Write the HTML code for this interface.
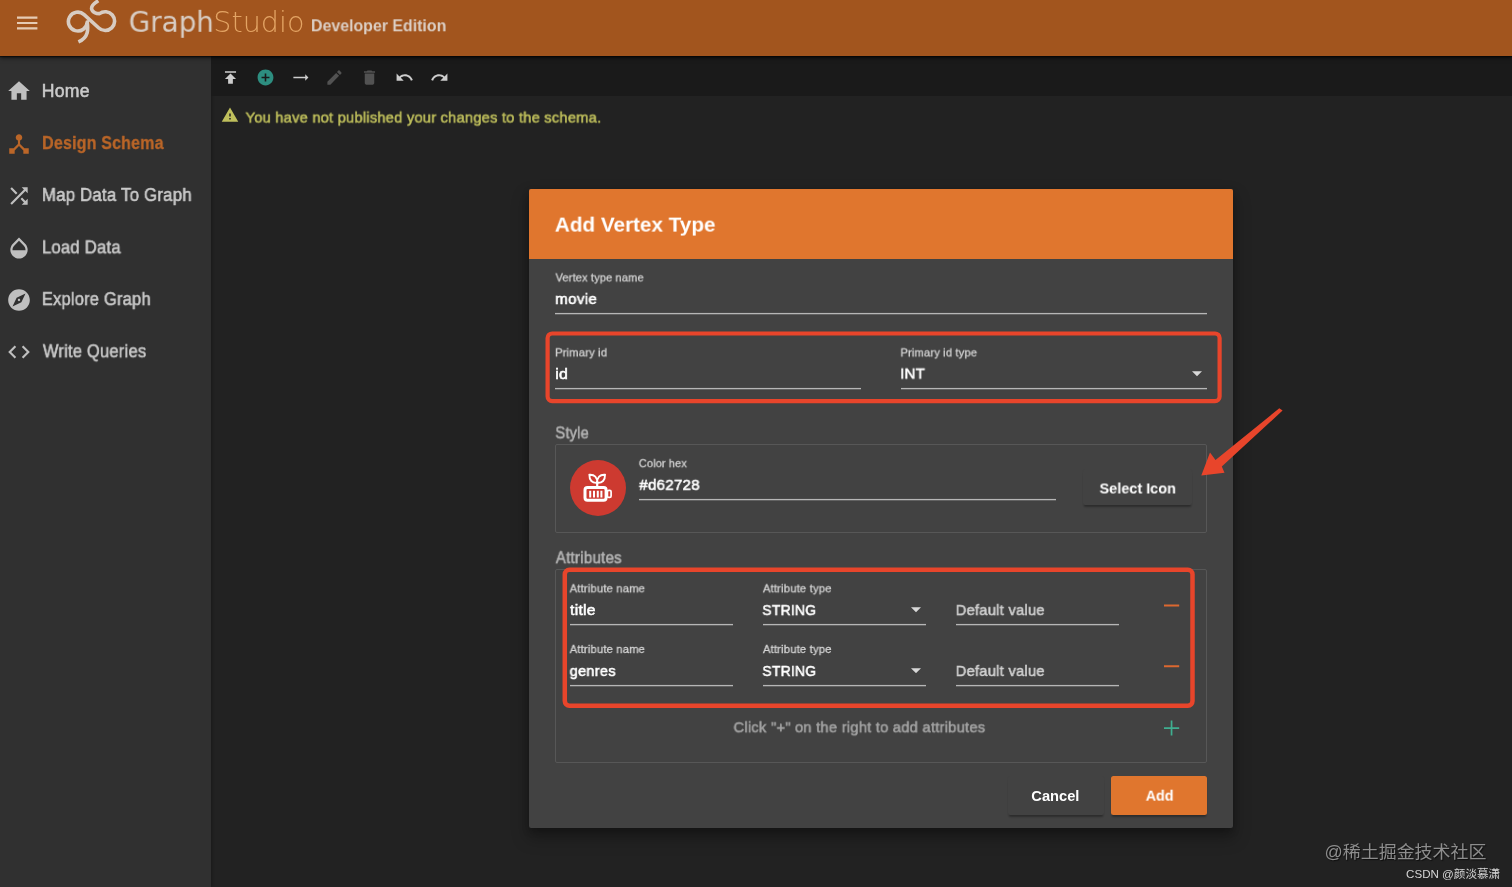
<!DOCTYPE html>
<html lang="en">
<head>
<meta charset="utf-8">
<title>GraphStudio - Add Vertex Type</title>
<style>
*{box-sizing:border-box;margin:0;padding:0}
html,body{width:1512px;height:887px;overflow:hidden;background:#222222;font-family:"Liberation Sans","Noto Sans CJK SC",sans-serif}
.abs,.t,svg.i{position:absolute}
.t{line-height:1;white-space:nowrap;display:inline-block;transform-origin:0 0;will-change:transform}
#header{left:0;top:0;width:1512px;height:56px;background:#a2551e;box-shadow:0 2px 4px rgba(0,0,0,.6),0 1px 1px rgba(0,0,0,.5)}
#side{left:0;top:56px;width:211px;height:831px;background:#303030;box-shadow:1px 0 3px rgba(0,0,0,.25)}
#tool{left:211px;top:56px;width:1301px;height:40px;background:#1a1a1a}
#dlg{left:529px;top:189px;width:704px;height:639px;background:#424242;border-radius:2px;box-shadow:0 9px 16px 2px rgba(0,0,0,.26),0 3px 7px rgba(0,0,0,.22)}
#dhead{left:529px;top:189px;width:704px;height:69.5px;background:#e0762e;border-radius:2px 2px 0 0}
.ul{height:1px;background:#b6b6b6;box-shadow:0 1px 0 rgba(182,182,182,.28),0 -1px 0 rgba(182,182,182,.08)}
.box{border:1px solid #575757;border-radius:2px}
.red{border:3.6px solid #e8452b;border-radius:7px}
.btn{background:#424242;border-radius:2.5px;box-shadow:0 3px 2px -1px rgba(0,0,0,.3),0 1px 2px rgba(0,0,0,.05)}
</style>
</head>
<body>
<nav aria-label="Main navigation">
<div class="abs" id="side"></div>
<!-- sidebar icons -->
<svg class="i" style="left:6px;top:78.4px" width="26" height="26" viewBox="0 0 24 24"><path fill="#bfbfbf" d="M10 20v-6h4v6h5v-8h3L12 3 2 12h3v8z"/></svg>
<svg class="i" style="left:6px;top:130.5px" width="26" height="26" viewBox="0 0 24 24"><path fill="#bb6628" d="M17 16l-4-4V8.82C14.16 8.4 15 7.3 15 6c0-1.66-1.34-3-3-3S9 4.34 9 6c0 1.300.84 2.400 2 2.820V12l-4 4H3v5h5v-3.050l4-4.200 4 4.200V21h5v-5h-4z"/></svg>
<svg class="i" style="left:6px;top:182.6px" width="26" height="26" viewBox="0 0 24 24"><path fill="#bfbfbf" d="M10.59 9.17L5.41 4 4 5.41l5.17 5.17 1.42-1.41zM14.5 4l2.04 2.04L4 18.59 5.410 20 17.960 7.460 20 9.500V4h-5.500zm.33 9.41l-1.41 1.41 3.13 3.13L14.5 20H20v-5.500l-2.040 2.040-3.130-3.130z"/></svg>
<svg class="i" style="left:6px;top:234.7px" width="26" height="26" viewBox="0 0 24 24"><path fill="#bfbfbf" d="M17.66 8L12 2.35 6.34 8C4.78 9.56 4 11.64 4 13.64s.78 4.11 2.34 5.67 3.61 2.35 5.66 2.35 4.1-.79 5.66-2.35S20 15.64 20 13.64 19.22 9.56 17.66 8zM6 14c.01-2 .62-3.27 1.76-4.4L12 5.27l4.24 4.38C17.38 10.77 17.99 12 18 14H6z"/></svg>
<svg class="i" style="left:6px;top:286.8px" width="26" height="26" viewBox="0 0 24 24"><path fill="#bfbfbf" d="M12 10.9c-.61 0-1.1.49-1.1 1.1s.49 1.1 1.1 1.1c.61 0 1.1-.49 1.1-1.1s-.49-1.1-1.1-1.1zM12 2C6.48 2 2 6.48 2 12s4.48 10 10 10 10-4.48 10-10S17.52 2 12 2zm2.19 12.19L6 18l3.81-8.19L18 6l-3.81 8.19z"/></svg>
<svg class="i" style="left:6px;top:338.9px" width="26" height="26" viewBox="0 0 24 24"><path fill="#bfbfbf" d="M9.4 16.6L4.8 12l4.6-4.6L8 6l-6 6 6 6 1.4-1.4zm5.2 0l4.6-4.6-4.6-4.6L16 6l6 6-6 6-1.4-1.4z"/></svg>
<span class="t" style="left:41px;top:82px;transform:translate(0.73px,0.97px) scaleX(1.0012);font-size:17.6px;font-weight:400;color:#cacaca;-webkit-text-stroke:0.55px #cacaca;letter-spacing:0.25px">Home</span>
<span class="t" style="left:42px;top:135px;transform:translate(0.09px,0.05px) scaleX(0.9100);font-size:17.6px;font-weight:700;color:#bb6628;-webkit-text-stroke:0.3px #bb6628;letter-spacing:0.2px">Design Schema</span>
<span class="t" style="left:41px;top:186px;transform:translate(0.97px,0.98px) scaleX(0.9515);font-size:17.6px;font-weight:400;color:#cacaca;-webkit-text-stroke:0.55px #cacaca;letter-spacing:0.25px">Map Data To Graph</span>
<span class="t" style="left:41px;top:239px;transform:translate(0.98px,0.37px) scaleX(0.9446);font-size:17.6px;font-weight:400;color:#cacaca;-webkit-text-stroke:0.55px #cacaca;letter-spacing:0.25px">Load Data</span>
<span class="t" style="left:41px;top:291px;transform:translate(0.88px,0.12px) scaleX(0.9336);font-size:17.6px;font-weight:400;color:#cacaca;-webkit-text-stroke:0.55px #cacaca;letter-spacing:0.25px">Explore Graph</span>
<span class="t" style="left:42px;top:343px;transform:translate(0.88px,0.27px) scaleX(0.9361);font-size:17.6px;font-weight:400;color:#cacaca;-webkit-text-stroke:0.55px #cacaca;letter-spacing:0.25px">Write Queries</span>
</nav>

<main>
<div class="abs" id="tool"></div>
<!-- toolbar icons -->
<svg class="i" style="left:220.85px;top:68.1px" width="19" height="19" viewBox="0 0 24 24"><path fill="#cdcdcd" d="M5 4v2h14V4H5zm0 10h4v6h6v-6h4l-7-7-7 7z"/></svg>
<svg class="i" style="left:255.65px;top:68.1px" width="19" height="19" viewBox="0 0 24 24"><path fill="#2d8e80" d="M12 2C6.48 2 2 6.48 2 12s4.48 10 10 10 10-4.48 10-10S17.52 2 12 2zm5 11h-4v4h-2v-4H7v-2h4V7h2v4h4v2z"/></svg>
<svg class="i" style="left:290.55px;top:68.1px" width="19" height="19" viewBox="0 0 24 24"><path fill="#cdcdcd" d="M22 12l-4-4v3H3v2h15v3z"/></svg>
<svg class="i" style="left:325.45px;top:68.1px" width="19" height="19" viewBox="0 0 24 24"><path fill="#525252" d="M3 17.25V21h3.75L17.81 9.94l-3.75-3.75L3 17.25zM20.71 7.04c.39-.39.39-1.02 0-1.41l-2.34-2.34c-.39-.39-1.02-.39-1.41 0l-1.83 1.83 3.75 3.75 1.83-1.83z"/></svg>
<svg class="i" style="left:360.35px;top:68.1px" width="19" height="19" viewBox="0 0 24 24"><path fill="#525252" d="M6 19c0 1.1.9 2 2 2h8c1.1 0 2-.9 2-2V7H6v12zM19 4h-3.500l-1-1h-5l-1 1H5v2h14V4z"/></svg>
<svg class="i" style="left:395.25px;top:68.1px" width="19" height="19" viewBox="0 0 24 24"><path fill="#cdcdcd" d="M12.5 8c-2.65 0-5.05.99-6.9 2.600L2 7v9h9l-3.620-3.620c1.390-1.160 3.160-1.880 5.120-1.880 3.540 0 6.550 2.310 7.600 5.500l2.370-.780C21.080 11.030 17.150 8 12.500 8z"/></svg>
<svg class="i" style="left:430.15px;top:68.1px" width="19" height="19" viewBox="0 0 24 24"><path fill="#cdcdcd" d="M18.400 10.600C16.550 8.990 14.150 8 11.500 8c-4.650 0-8.580 3.030-9.960 7.220L3.900 16c1.050-3.190 4.050-5.500 7.600-5.500 1.950 0 3.730.720 5.120 1.880L13 16h9V7l-3.600 3.600z"/></svg>
<!-- warning -->
<svg class="i" style="left:221.4px;top:106.2px" width="18" height="18" viewBox="0 0 24 24"><path fill="#bfbf5c" d="M1 21h22L12 2 1 21zm12-3h-2v-2h2v2zm0-4h-2v-4h2v4z"/></svg>
<span class="t" style="left:245px;top:109px;transform:translate(0.51px,0.55px) scaleX(0.9453);font-size:15.5px;font-weight:400;color:#bfbf5c;-webkit-text-stroke:0.55px #bfbf5c;letter-spacing:0.25px">You have not published your changes to the schema.</span>
</main>

<header>
<div class="abs" id="header"></div>
<!-- header icons -->
<svg class="i" style="left:15px;top:14px" width="24" height="18" viewBox="15 14 24 18"><path fill="#e6cbb4" d="M17 16.5h20.400v2.200H17zM17 21.900h20.400v2.200H17zM17 27.300h20.400v2.200H17z"/></svg>
<svg class="i" style="left:60px;top:0" width="64" height="50" viewBox="60 0 64 50" fill="none" stroke="#d8ccc2" stroke-width="3.600" stroke-linejoin="round">
<path d="M78.400 41.900 C88.800 37.500 88.200 29 87.200 22 A9.400 9.400 0 1 1 84.100 14.600 L98.800 28 A9.400 9.400 0 1 0 99.500 13.600 C94 13.500 85.500 8.500 98.300 0.700"/>
</svg>
<span class="t" style="left:128px;top:8px;transform:translate(0.67px,0.79px) scaleX(0.9821);font-size:28.3px;font-weight:400;color:#d8cdc4;font-family:'DejaVu Sans','Liberation Sans',sans-serif">Graph</span>
<span class="t" style="left:213px;top:9px;transform:translate(0.23px,0.00px) scaleX(1.0126);font-size:28.3px;font-weight:200;color:#e3a464;font-family:'DejaVu Sans Light','DejaVu Sans','Liberation Sans',sans-serif;font-weight:200">Studio</span>
<span class="t" style="left:310px;top:17px;transform:translate(0.95px,0.29px) scaleX(0.9838);font-size:16.2px;font-weight:700;color:#dccfc5">Developer Edition</span>
</header>

<section role="dialog" aria-label="Add Vertex Type">
<!-- dialog -->
<div class="abs" id="dlg"></div>
<div class="abs" id="dhead"></div>

<div class="abs ul" style="left:555px;top:313px;width:652px"></div>
<div class="abs ul" style="left:555px;top:388px;width:306px"></div>
<div class="abs ul" style="left:901px;top:388px;width:306px"></div>
<svg class="i" style="left:1192.2px;top:371.4px" width="10" height="5.4" viewBox="0 0 10 5"><path fill="#d8d8d8" d="M0 0h10L5 5z"/></svg>
<svg class="i" style="left:540px;top:326px" width="690" height="84" viewBox="540 326 690 84"><rect x="547.600" y="333.500" width="672" height="67.600" rx="4.600" fill="none" stroke="#e8452b" stroke-width="4.200"/></svg>

<div class="abs box" style="left:555px;top:444px;width:652px;height:89px"></div>
<div class="abs" style="left:569.8px;top:459.6px;width:56.2px;height:56.2px;border-radius:50%;background:#cd3a30"></div>
<svg class="i" style="left:581px;top:470px" width="34" height="34" viewBox="581 470 34 34" fill="none" stroke="#fff">
<rect x="585" y="487.500" width="21.100" height="12.800" rx="2.500" stroke-width="3"/>
<path d="M590.200 490.700v6.800M594 490.700v6.800M597.800 490.700v6.800M601.400 490.700v6.800" stroke-width="2"/>
<rect x="607.400" y="490.400" width="3.700" height="7" rx="1.400" stroke-width="1.700"/>
<path d="M597.200 486.500v-5.500" stroke-width="2.200"/>
<path d="M597.200 482.800c-5 .500-8-2.600-7.800-8c5.200-.400 8 2.500 7.800 8zM597.200 482.800c5 .500 8-2.600 7.800-8c-5.200-.400-8 2.500-7.800 8z" stroke-width="1.900"/>
</svg>
<div class="abs ul" style="left:639px;top:499px;width:417px"></div>
<div class="abs btn" style="left:1083px;top:469px;width:109px;height:36px"></div>

<div class="abs box" style="left:555px;top:569px;width:652px;height:194px"></div>
<div class="abs ul" style="left:570px;top:624px;width:163px"></div>
<div class="abs ul" style="left:763px;top:624px;width:163px"></div>
<div class="abs ul" style="left:956px;top:624px;width:163px"></div>
<div class="abs ul" style="left:570px;top:685px;width:163px"></div>
<div class="abs ul" style="left:763px;top:685px;width:163px"></div>
<div class="abs ul" style="left:956px;top:685px;width:163px"></div>
<svg class="i" style="left:911px;top:607.3px" width="10" height="5.4" viewBox="0 0 10 5"><path fill="#d8d8d8" d="M0 0h10L5 5z"/></svg>
<svg class="i" style="left:911px;top:668.1px" width="10" height="5.4" viewBox="0 0 10 5"><path fill="#d8d8d8" d="M0 0h10L5 5z"/></svg>
<svg class="i" style="left:1160px;top:600px" width="24" height="140" viewBox="1160 600 24 140"><path fill="#dc6830" d="M1164 604.500h15.200v1.900H1164zM1164 665.300h15.200v1.900H1164z"/><path fill="#3fae90" d="M1164 727.200h15.200v1.700H1164zM1170.700 720.400h1.700v15.200h-1.700z"/></svg>
<svg class="i" style="left:556px;top:560px" width="646" height="156" viewBox="556 560 646 156"><rect x="564.800" y="569.700" width="627.700" height="136" rx="4.600" fill="none" stroke="#e8452b" stroke-width="4.500"/></svg>

<div class="abs btn" style="left:1008px;top:776px;width:96px;height:39px"></div>
<div class="abs btn" style="left:1111px;top:776px;width:96px;height:39px;background:#e0762e"></div>
<span class="t" style="left:554px;top:213px;transform:translate(0.81px,0.58px) scaleX(0.9859);font-size:21px;font-weight:700;color:#ffffff">Add Vertex Type</span>
<span class="t" style="left:555px;top:272px;transform:translate(0.55px,0.40px) scaleX(0.9362);font-size:11.8px;font-weight:400;color:#d4d4d4;-webkit-text-stroke:0.3px #d4d4d4;letter-spacing:0.15px">Vertex type name</span>
<span class="t" style="left:555px;top:290px;transform:translate(0.11px,1.00px) scaleX(0.9786);font-size:15.5px;font-weight:400;color:#ffffff;-webkit-text-stroke:0.55px #ffffff;letter-spacing:0.3px">movie</span>
<span class="t" style="left:555px;top:347px;transform:translate(0.08px,0.35px) scaleX(0.9540);font-size:11.8px;font-weight:400;color:#d4d4d4;-webkit-text-stroke:0.3px #d4d4d4;letter-spacing:0.15px">Primary id</span>
<span class="t" style="left:555px;top:365px;transform:translate(0.15px,0.52px) scaleX(1.0270);font-size:15.5px;font-weight:400;color:#ffffff;-webkit-text-stroke:0.55px #ffffff;letter-spacing:0.3px">id</span>
<span class="t" style="left:900px;top:347px;transform:translate(0.46px,0.40px) scaleX(0.9473);font-size:11.8px;font-weight:400;color:#d4d4d4;-webkit-text-stroke:0.3px #d4d4d4;letter-spacing:0.15px">Primary id type</span>
<span class="t" style="left:900px;top:365px;transform:translate(0.19px,0.55px) scaleX(0.9652);font-size:15.5px;font-weight:400;color:#ffffff;-webkit-text-stroke:0.55px #ffffff;letter-spacing:0.3px">INT</span>
<span class="t" style="left:555px;top:425px;transform:translate(0.39px,0.38px) scaleX(0.9336);font-size:15.6px;font-weight:400;color:#b4b4b4;-webkit-text-stroke:0.55px #b4b4b4;letter-spacing:0.25px">Style</span>
<span class="t" style="left:638px;top:458px;transform:translate(0.81px,0.13px) scaleX(0.9290);font-size:11.8px;font-weight:400;color:#d4d4d4;-webkit-text-stroke:0.3px #d4d4d4;letter-spacing:0.15px">Color hex</span>
<span class="t" style="left:639px;top:476px;transform:translate(0.27px,0.84px) scaleX(0.9716);font-size:15.5px;font-weight:400;color:#ffffff;-webkit-text-stroke:0.55px #ffffff;letter-spacing:0.3px">#d62728</span>
<span class="t" style="left:1099px;top:480px;transform:translate(0.53px,0.50px) scaleX(0.9581);font-size:15.1px;font-weight:700;color:#ffffff">Select Icon</span>
<span class="t" style="left:555px;top:550px;transform:translate(0.77px,0.24px) scaleX(0.9665);font-size:15.6px;font-weight:400;color:#b4b4b4;-webkit-text-stroke:0.55px #b4b4b4;letter-spacing:0.25px">Attributes</span>
<span class="t" style="left:569px;top:583px;transform:translate(0.62px,0.27px) scaleX(0.9570);font-size:11.8px;font-weight:400;color:#d4d4d4;-webkit-text-stroke:0.3px #d4d4d4;letter-spacing:0.15px">Attribute name</span>
<span class="t" style="left:569px;top:602px;transform:translate(0.97px,0.24px) scaleX(1.0121);font-size:15.5px;font-weight:400;color:#ffffff;-webkit-text-stroke:0.55px #ffffff;letter-spacing:0.3px">title</span>
<span class="t" style="left:762px;top:583px;transform:translate(0.87px,0.28px) scaleX(0.9590);font-size:11.8px;font-weight:400;color:#d4d4d4;-webkit-text-stroke:0.3px #d4d4d4;letter-spacing:0.15px">Attribute type</span>
<span class="t" style="left:762px;top:602px;transform:translate(0.28px,0.11px) scaleX(0.8953);font-size:15.5px;font-weight:400;color:#ffffff;-webkit-text-stroke:0.55px #ffffff;letter-spacing:0.3px">STRING</span>
<span class="t" style="left:955px;top:602px;transform:translate(0.69px,0.11px) scaleX(0.9508);font-size:15.5px;font-weight:400;color:#d0d0d0;-webkit-text-stroke:0.55px #d0d0d0;letter-spacing:0.25px">Default value</span>
<span class="t" style="left:569px;top:643px;transform:translate(0.67px,1.00px) scaleX(0.9559);font-size:11.8px;font-weight:400;color:#d4d4d4;-webkit-text-stroke:0.3px #d4d4d4;letter-spacing:0.15px">Attribute name</span>
<span class="t" style="left:569px;top:662px;transform:translate(0.64px,1.00px) scaleX(0.9371);font-size:15.5px;font-weight:400;color:#ffffff;-webkit-text-stroke:0.55px #ffffff;letter-spacing:0.3px">genres</span>
<span class="t" style="left:762px;top:643px;transform:translate(0.91px,1.00px) scaleX(0.9580);font-size:11.8px;font-weight:400;color:#d4d4d4;-webkit-text-stroke:0.3px #d4d4d4;letter-spacing:0.15px">Attribute type</span>
<span class="t" style="left:762px;top:662px;transform:translate(0.36px,0.97px) scaleX(0.8941);font-size:15.5px;font-weight:400;color:#ffffff;-webkit-text-stroke:0.55px #ffffff;letter-spacing:0.3px">STRING</span>
<span class="t" style="left:955px;top:662px;transform:translate(0.69px,1.00px) scaleX(0.9506);font-size:15.5px;font-weight:400;color:#d0d0d0;-webkit-text-stroke:0.55px #d0d0d0;letter-spacing:0.25px">Default value</span>
<span class="t" style="left:733px;top:719px;transform:translate(0.50px,0.27px) scaleX(0.9494);font-size:15.5px;font-weight:400;color:#a3a3a3;-webkit-text-stroke:0.55px #a3a3a3;letter-spacing:0.25px">Click &quot;+&quot; on the right to add attributes</span>
<span class="t" style="left:1031px;top:788px;transform:translate(0.32px,0.66px) scaleX(1.0035);font-size:14.6px;font-weight:700;color:#ffffff">Cancel</span>
<span class="t" style="left:1145px;top:788px;transform:translate(0.70px,0.68px) scaleX(0.9799);font-size:14.6px;font-weight:700;color:#ffffff">Add</span>
</section>

<!-- annotation arrow -->
<svg class="i" style="left:1190px;top:400px" width="100" height="84" viewBox="1190 400 100 84"><path fill="#e8452b" d="M1201.3 475.400L1210 452.400L1215.500 460L1279.300 408.300L1282.600 410.600L1221.800 466.600L1224.500 472.800z"/></svg>

<footer>
<span class="t" style="left:1324px;top:844px;transform:translate(0.56px,0.00px) scaleX(1.0259);font-size:17.5px;font-weight:400;color:#8d8d8d;text-shadow:1px 1px 1px rgba(0,0,0,.6)">@稀土掘金技术社区</span>
<span class="t" style="left:1406px;top:869px;transform:translate(0.04px,0.29px) scaleX(1.0070);font-size:11.5px;font-weight:400;color:#d6d6d6">CSDN @颜淡慕潇</span>
</footer>
</body>
</html>
